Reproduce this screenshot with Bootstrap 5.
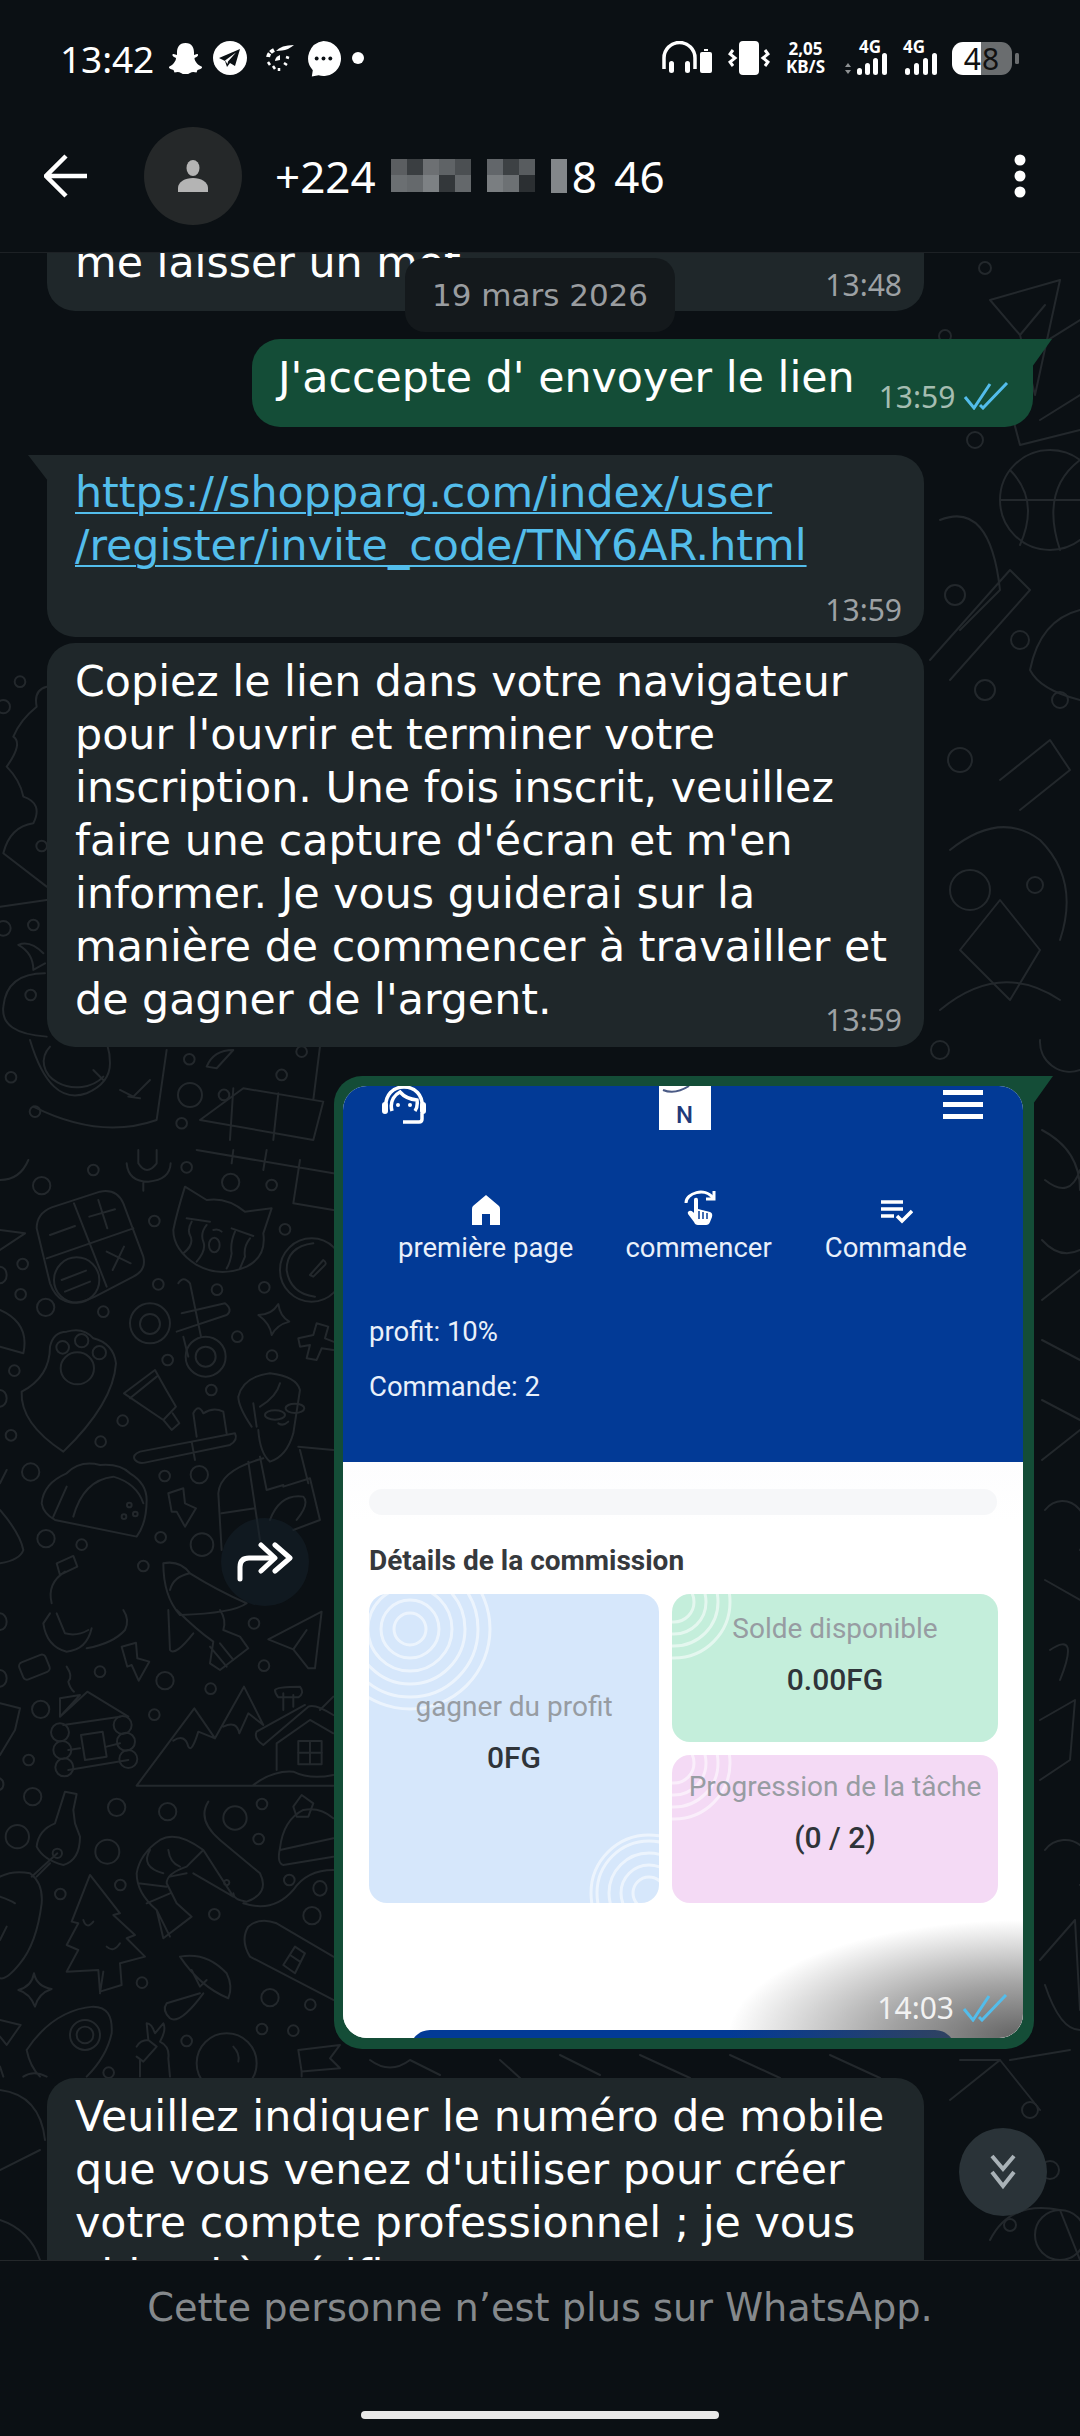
<!doctype html>
<html lang="fr">
<head>
<meta charset="utf-8">
<title>WhatsApp</title>
<link rel="stylesheet" href="https://cdn.jsdelivr.net/npm/bootstrap@5.3.0/dist/css/bootstrap.min.css">
<style>
html,body{margin:0;background:#0b1014}
.phone{width:1080px;height:2436px;background:#0b1014;color:#fff;font-family:"Noto Sans",sans-serif;overflow:hidden}
.topbar{height:253px;flex:none;background:#0b1014;border-bottom:1px solid #1d2125;padding-bottom:17px}
.statusrow{height:116px;padding:0 60px}
.clock{font-size:37px;line-height:1;letter-spacing:-.1px;margin-right:14px}
.speed{font-size:17px;line-height:18px;font-weight:700;text-align:center}
.battery{width:60px;height:33px;border-radius:11px;overflow:hidden;background:linear-gradient(90deg,#fff 0 29px,#6a6d6f 29px);color:#111;font-size:30px;line-height:33px;text-align:center;letter-spacing:1px;font-weight:400}
.toolrow{height:120px;padding-left:44px;padding-right:54px}
.face{width:98px;height:98px;border-radius:50%;background:#252829;margin-left:56px;margin-right:33px}
.title{font-size:44px;line-height:1;word-spacing:6px}
.mosaic{margin:0 3px 0 15px}
.chat{flex:1 1 auto;position:relative;overflow:hidden;min-height:0}
.paper{position:absolute;left:0;top:0;width:1080px;height:2007px;pointer-events:none}
.paper *{fill:none;stroke:#23282c;stroke-width:6;stroke-linecap:round;stroke-linejoin:round}
.paper .plain *{stroke-width:2}
.feed{position:relative}
.msg{font-family:"DejaVu Sans",sans-serif;font-size:42.75px;line-height:53px}
.inbox{position:relative;width:877px;margin-left:47px;background:#1f272a;border-radius:28px;padding:0 28px}
.outbox{position:relative;background:#144d37;border-radius:28px}
.tail-l{border-top-left-radius:0}
.tail-l::before{content:"";position:absolute;left:-19px;top:0;width:20px;height:26px;background:#1f272a;clip-path:polygon(0 0,100% 0,100% 100%)}
.tail-r{border-top-right-radius:0}
.tail-r::after{content:"";position:absolute;right:-19px;top:0;width:20px;height:28px;background:#144d37;clip-path:polygon(0 0,100% 0,0 100%)}
.stamp{font-family:"Noto Sans",sans-serif;font-size:30px;line-height:40px;color:#9da1a4}
.stamp-row{margin-right:-6px}
.first{margin-top:-40px;padding-top:23px;padding-bottom:6px}
.first .stamp-row{margin-top:-24px}
.sent{width:781px;margin-left:252px;margin-top:28px;height:88px;padding:12px 0 0 26px}
.sent .stamp{color:#a5bdb1;margin:26px 0 0 24px}
.checks{margin-left:8px;margin-top:31px}
.linkbox{margin-top:28px;padding-top:11px;padding-bottom:7px}
.linkbox a{color:#53bdeb;text-decoration:underline;text-underline-offset:5px;text-decoration-thickness:2px}
.linkbox .stamp-row{margin-top:18px}
.longbox{margin-top:6px;padding-top:12px;padding-bottom:7px}
.longbox .stamp-row{margin-top:-26px}
.lastbox{margin-top:29px;padding-top:12px;padding-bottom:30px}
.imgbubble{width:700px;height:973px;margin-left:334px;margin-top:29px;padding:10px 11px 11px 9px}
.shot{position:relative;height:952px;border-radius:24px;overflow:hidden;background:#fff;font-family:Roboto,sans-serif}
.bluepart{height:376px;background:#023a96;color:#e9f0fa;font-size:27.5px;line-height:32px}
.shotnav{padding:0 40px 0 39px;height:48px}
.logo{width:52px;height:44px;background:#fff;color:#1f3a7a;font-size:24px;font-weight:500;line-height:24px;text-align:center;padding-top:17px;position:relative}
.menu3{width:40px;height:29px;margin-top:4px;border-top:5px solid #fff;border-bottom:5px solid #fff;position:relative}
.menu3::after{content:"";position:absolute;left:0;right:0;top:7px;height:5px;background:#fff}
.tabs{padding:55px 0 0 55px}
.tab{text-align:center;white-space:nowrap}
.tab svg{display:block;margin:0 auto 7px}
.tabgap1{margin-left:52px}
.tabgap2{margin-left:53px}
.rate{padding:52px 0 0 26px}
.rate p{margin:0 0 23px}
.whitepart{padding:27px 26px 0;color:#333a40;background:linear-gradient(#fdfdfe,#fff 60px)}
.ghostbar{height:26px;background:#f6f7f9;border-radius:13px;margin-bottom:31px}
.subhead{font-size:28px;font-weight:700;line-height:30px;margin:0 0 18px;color:#36393d}
.cards{display:grid;grid-template-columns:290px 326px;grid-template-rows:148px 148px;gap:13px}
.tile{position:relative;overflow:hidden;border-radius:18px;text-align:center}
.tile svg{position:absolute;fill:none;stroke:#fff;stroke-opacity:.55;stroke-width:3}
.tile-blue{grid-row:1 / span 2;background:#d6e7fb;padding-top:97px}
.tile-green{background:#c4eedb;padding-top:19px}
.tile-pink{background:#f4daf5;padding-top:16px}
.tile-k{position:relative;font-size:28px;line-height:32px;color:#979ca2;display:block}
.tile-v{position:relative;font-size:30px;line-height:36px;font-weight:500;color:#2f3439;display:block;margin-top:17px}
.cta{height:20px;background:#023a96;border-radius:20px 20px 0 0;margin:127px 42px 0 41px}
.shade{position:absolute;left:0;right:0;bottom:0;height:160px;background:radial-gradient(ellipse 295px 118px at 100% 100%,rgba(70,70,70,.85),rgba(70,70,70,.5) 45%,rgba(70,70,70,0) 100%)}
.shot-time{position:absolute;right:15px;bottom:10px;font-family:"Noto Sans",sans-serif;font-size:30px;line-height:40px;color:#f2f2f2}
.datechip{position:absolute;left:405px;top:5px;width:270px;height:74px;border-radius:20px;background:#14191c;color:#9a9da0;font-family:"DejaVu Sans",sans-serif;font-size:31px;line-height:74px;text-align:center}
.fwd{position:absolute;left:221px;top:1265px;width:88px;height:88px;border-radius:50%;background:rgba(22,33,41,.55)}
.down{position:absolute;left:959px;top:1875px;width:88px;height:88px;border-radius:50%;background:#2a3338}
.bottombar{height:176px;flex:none;background:#0b1014;border-top:1px solid #24282b;padding-top:22px}
.gone{font-family:"DejaVu Sans",sans-serif;font-size:38.3px;line-height:50px;color:#85898c;text-align:center}
.homebar{width:358px;height:8px;background:#e8e8e8;border-radius:4px;margin:0 auto;position:relative;top:78px}
</style>
</head>
<body>
<div class="phone d-flex flex-column">
  <header class="topbar">
    <div class="statusrow d-flex align-items-center">
      <span class="clock">13:42</span>
      <svg width="35" height="31" viewBox="0 0 35 31"><path fill="#fff" d="M17.500 0C24 0 26 5 26 9.500V12l3-1c1.500 0 1.500 2-.5 3l-2 1c0 3 3 7 7 8.500 1 .5.500 2-1 2.500l-3 1-1 2.500c-2-.5-4.500-1-6.500.5-2 1.300-3 1.500-4.500 1.500s-2.500-.2-4.500-1.500c-2-1.500-4.500-1-6.500-.5l-1-2.500-3-1c-1.500-.5-2-2-1-2.500C5 22 8 18 8 15l-2-1c-2-1-2-3-.5-3l3.500 1V9.500C9 5 11 0 17.500 0z"/></svg>
      <svg width="34" height="34" viewBox="0 0 34 34" style="margin-left:10px"><circle cx="17" cy="17" r="17" fill="#fff"/><path fill="#0b1014" d="M27 8 6 17l6 3 2 6 3-4 5 3zM12 19.500 23 11.500 15 20.500 14.500 23z"/></svg>
      <svg width="28" height="28" viewBox="0 0 28 28" style="margin-left:19px" fill="none"><path d="M28 1Q15 1 10 7l6-.5Q22 6 28 1z" fill="#fff"/><path d="M8 6Q2 9 2 14" stroke="#fff" stroke-width="4" stroke-dasharray="4 1.500"/><path d="M2 18l2 3M7 22l2 3M13 24l0 3M18 19l3 2M20 13l3 1" stroke="#fff" stroke-width="2.500"/><path d="M14 11Q9 13 9 17l5-1z" fill="#fff"/></svg>
      <svg width="37" height="37" viewBox="0 0 38 38" style="margin-left:11px"><path fill="#fff" d="M19 1a18 18 0 1 1-5 35.300L7 37.500l1-6.500A18 18 0 0 1 19 1z"/><circle cx="12" cy="19" r="2" fill="#0b1014"/><circle cx="19" cy="19" r="2" fill="#0b1014"/><circle cx="26" cy="19" r="2" fill="#0b1014"/></svg>
      <svg width="12" height="12" viewBox="0 0 12 12" style="margin-left:10px"><circle cx="6" cy="6" r="6" fill="#fff"/></svg>
      <div class="d-flex align-items-center ms-auto">
        <svg width="50" height="34" viewBox="0 0 50 34" fill="none"><path d="M2 28V17a15.500 15.500 0 0 1 31 0v11" stroke="#fff" stroke-width="3.500"/><rect x="7" y="20" width="5" height="12" rx="2.500" fill="#fff"/><rect x="23" y="20" width="5" height="12" rx="2.500" fill="#fff"/><rect x="38" y="11" width="12" height="21" rx="2" fill="#fff"/><rect x="42" y="8" width="4" height="2" fill="#fff"/></svg>
        <svg width="42" height="34" viewBox="0 0 42 34" style="margin-left:16px" fill="none"><rect x="11" y="0" width="20" height="34" rx="4" fill="#fff"/><path d="M5 9l-3 4 5 4-5 4 3 4M37 9l3 4-5 4 5 4-3 4" stroke="#fff" stroke-width="3"/></svg>
        <div class="speed" style="margin-left:16px">2,05<br>KB/S</div>
        <svg width="42" height="36" viewBox="0 0 42 36" style="margin-left:20px" fill="#fff"><text x="14" y="13" font-family="Noto Sans" font-size="17" font-weight="700">4G</text><path d="M0 27l3-4 3 4z" fill="#8e9193"/><path d="M0 30l3 4 3-4z" fill="#8e9193"/><rect x="12" y="28" width="5" height="7" rx="2.500"/><rect x="20" y="23" width="5" height="12" rx="2.500"/><rect x="28" y="18" width="5" height="17" rx="2.500"/><rect x="37" y="13" width="5" height="22" rx="2.500"/></svg>
        <svg width="35" height="36" viewBox="0 0 35 36" style="margin-left:15px" fill="#fff"><text x="1" y="13" font-family="Noto Sans" font-size="17" font-weight="700">4G</text><rect x="3" y="28" width="5" height="7" rx="2.500"/><rect x="12" y="23" width="5" height="12" rx="2.500"/><rect x="21" y="18" width="5" height="17" rx="2.500"/><rect x="30" y="13" width="5" height="22" rx="2.500"/></svg>
        <div class="battery" style="margin-left:15px">48</div>
        <svg width="4" height="11" viewBox="0 0 4 11" style="margin-left:3px;margin-right:1px"><rect width="4" height="11" rx="1.500" fill="#6a6d6f"/></svg>
      </div>
    </div>
    <div class="toolrow d-flex align-items-center">
      <svg width="44" height="44" viewBox="0 0 44 44" fill="none"><path d="M43 22H3M22 2 2 22l20 20" stroke="#fff" stroke-width="4.500"/></svg>
      <div class="face d-flex align-items-center justify-content-center">
        <svg width="32" height="32" viewBox="0 0 32 32"><ellipse cx="16" cy="8" rx="6.500" ry="8" fill="#b4b4b4"/><path d="M1 32v-4c0-6 7-10 15-10s15 4 15 10v4z" fill="#b4b4b4"/></svg>
      </div>
      <span class="title">+224</span>
      <svg class="mosaic" width="178" height="34" viewBox="0 0 178 34"><g fill="#6d7073"><rect width="16" height="16" fill="#5b5e61"/><rect x="16" width="16" height="16" fill="#3a3e41"/><rect x="32" width="16" height="16" fill="#6d7073"/><rect x="48" width="16" height="16" fill="#5f6366"/><rect x="64" width="16" height="16" fill="#4b4f52"/><rect y="16" width="16" height="17" fill="#6b6f72"/><rect x="16" y="16" width="16" height="17" fill="#65696c"/><rect x="32" y="16" width="16" height="17" fill="#7d8184"/><rect x="48" y="16" width="16" height="17" fill="#33373a"/><rect x="64" y="16" width="16" height="17" fill="#64686b"/><rect x="96" width="16" height="16" fill="#62666a"/><rect x="112" width="16" height="16" fill="#3d4144"/><rect x="128" width="16" height="16" fill="#585c5f"/><rect x="96" y="16" width="16" height="17" fill="#7a7e81"/><rect x="112" y="16" width="16" height="17" fill="#6d7174"/><rect x="128" y="16" width="16" height="17" fill="#2b2f32"/><rect x="160" width="16" height="34" fill="#83878a"/></g></svg>
      <span class="title">8 46</span>
      <svg class="ms-auto" width="12" height="44" viewBox="0 0 12 44" fill="#fff"><circle cx="6" cy="6" r="5.500"/><circle cx="6" cy="22" r="5.500"/><circle cx="6" cy="38" r="5.500"/></svg>
    </div>
  </header>

  <main class="chat">
    <svg class="paper" viewBox="0 253 1080 2007" aria-hidden="true">
      <g transform="translate(0,640) scale(.3333)">
        <circle cx="60" cy="125" r="16"/><circle cx="125" cy="618" r="16"/><circle cx="100" cy="855" r="16"/><circle cx="92" cy="1065" r="16"/><circle cx="10" cy="865" r="22"/><circle cx="10" cy="200" r="20"/>
        <path d="M140 140Q100 150 110 200Q60 240 40 290Q70 310 20 380Q60 420 70 470Q130 490 100 550Q30 560 10 640L140 740M0 800L140 780M130 940Q90 900 55 915Q100 940 100 990L135 970M135 1000Q20 1000 10 1100Q0 1180 140 1190"/>
        <path d="M90 1200Q150 1400 260 1360Q330 1330 330 1270Q330 1210 300 1180M150 1220a90 70 0 0 0 160 90M280 1290l30 30M500 1230L470 1440Q300 1500 100 1400"/>
        <path d="M360 1350L400 1370L450 1320M385 1370L420 1375"/>
        <circle cx="33" cy="1312" r="16"/><circle cx="105" cy="1415" r="16"/><circle cx="568" cy="1258" r="16"/><circle cx="570" cy="1365" r="36"/><circle cx="672" cy="1365" r="16"/><circle cx="845" cy="1305" r="16"/><circle cx="545" cy="1450" r="16"/><circle cx="905" cy="1235" r="16"/>
        <path d="M620 1280Q640 1230 700 1230L650 1285ZM730 1345L970 1385L940 1500L600 1440ZM835 1360L820 1500M960 1220L940 1380M700 1345L690 1500"/>
      </g>
      <g transform="translate(0,1150) scale(.3333)">
        <circle cx="125" cy="107" r="26"/><circle cx="280" cy="60" r="16"/><circle cx="463" cy="213" r="16"/><circle cx="692" cy="97" r="26"/><circle cx="815" cy="105" r="16"/><circle cx="560" cy="52" r="16"/><circle cx="855" cy="238" r="16"/><circle cx="68" cy="342" r="16"/><circle cx="62" cy="433" r="16"/><circle cx="137" cy="472" r="26"/><circle cx="310" cy="485" r="16"/><circle cx="475" cy="403" r="16"/><circle cx="651" cy="419" r="16"/><circle cx="793" cy="412" r="16"/><circle cx="712" cy="560" r="16"/><circle cx="816" cy="617" r="16"/><circle cx="503" cy="630" r="16"/><circle cx="634" cy="720" r="16"/><circle cx="43" cy="662" r="16"/><circle cx="368" cy="812" r="16"/><circle cx="302" cy="875" r="16"/><circle cx="33" cy="856" r="16"/><circle cx="92" cy="966" r="26"/><circle cx="494" cy="978" r="16"/><circle cx="598" cy="974" r="26"/><circle cx="138" cy="1166" r="26"/><circle cx="245" cy="1184" r="16"/><circle cx="482" cy="1162" r="16"/><circle cx="606" cy="1184" r="34"/><circle cx="430" cy="1248" r="16"/>
        <path d="M380 40Q385 95 445 95Q510 90 512 40M430 95V122M415 0V40Q440 80 470 40V0"/>
        <path d="M110 235Q110 190 155 172L300 125Q350 115 370 160L430 320Q440 360 400 380L285 440Q220 470 190 450Q165 440 150 400ZM222 160L320 410M140 325L400 235M268 200L345 178M295 150L322 235M150 255L225 228M320 305L392 340M372 290L338 360"/>
        <circle cx="230" cy="390" r="68"/><path d="M185 390L258 362M195 425L270 395"/>
        <path d="M555 110L620 150Q680 140 735 185L815 175L790 250Q800 320 740 350Q660 385 590 345Q520 300 520 240Q530 190 555 110ZM560 205L630 215M695 235L760 258M575 215Q560 240 572 260Q582 285 550 310M620 225Q600 250 610 275Q620 300 590 335M705 245Q690 280 695 310Q690 340 680 355M750 265Q730 290 735 320L720 355"/>
        <ellipse cx="643" cy="285" rx="16" ry="22"/><path d="M640 240Q655 235 665 245"/>
        <circle cx="935" cy="360" r="95"/><path d="M940 280Q860 290 860 360Q870 430 945 440M930 375L970 330Q985 340 970 350L940 380Z"/>
        <circle cx="450" cy="520" r="60"/><circle cx="450" cy="522" r="30"/><circle cx="617" cy="620" r="60"/><circle cx="617" cy="620" r="30"/>
        <path d="M535 400Q550 375 570 400L603 560M545 490L675 460Q700 480 680 495L530 545M550 560L565 620"/>
        <path d="M835 462Q840 500 868 515Q830 525 815 555Q810 520 775 495Q815 495 835 462Z"/>
        <path d="M950 520L985 530L975 565L1000 575M950 520L940 555L895 565L900 590L930 585L920 625L950 630L965 595L1000 600"/>
        <path d="M150 590Q160 545 200 545Q250 530 280 565Q340 580 348 640Q340 760 190 905Q60 820 65 725Q150 680 150 590Z"/>
        <circle cx="188" cy="592" r="19"/><circle cx="245" cy="572" r="20"/><circle cx="298" cy="608" r="20"/><ellipse cx="232" cy="655" rx="50" ry="48"/>
        <path d="M465 660L372 730L490 810L528 770Q495 715 465 660ZM390 745L470 680M490 810L515 840L538 820L518 790"/>
        <path d="M420 905Q395 915 405 930Q415 942 435 938L690 885Q715 870 705 850ZM575 875L585 930M590 860L580 790Q595 760 610 790Q640 770 670 785L680 850"/>
        <path d="M755 830Q715 770 715 740Q730 680 810 670Q890 680 900 720L880 850Q860 920 810 935Q780 910 775 840M760 760L770 830M840 700Q830 740 780 770M790 925Q660 960 655 1030L665 1200M780 920L800 1020L850 1005M895 890L1000 900M900 900L925 1000M745 935L780 1170M665 1090L765 1075M850 1010L930 985L960 1110L880 1140M810 1110Q840 1030 910 1040Q930 1060 890 1110"/>
        <ellipse cx="825" cy="795" rx="30" ry="14"/><ellipse cx="885" cy="775" rx="28" ry="14"/><path d="M835 820Q850 830 865 815"/>
        <path d="M165 1110Q130 1090 125 1060Q130 1000 200 970Q240 930 300 945Q360 940 390 970Q440 1000 440 1050Q440 1120 410 1160ZM220 1100Q250 990 340 980Q410 1000 430 1060M160 1100L200 1010"/>
        <circle cx="372" cy="1100" r="7"/><circle cx="406" cy="1092" r="7"/><circle cx="388" cy="1065" r="7"/>
        <path d="M505 1030L550 1015L555 1060L588 1075L555 1130L530 1085L515 1085Z"/>
        <path d="M170 1240L220 1218L232 1250L180 1275ZM195 1265Q140 1300 155 1360"/>
        <path d="M490 1240Q540 1230 570 1270Q650 1320 740 1360Q700 1390 540 1395Q490 1340 490 1240ZM510 1320Q520 1280 570 1270"/>
        <path d="M0 240L75 250L0 300M0 90Q60 90 85 30M0 480Q90 520 70 610L0 590M0 1000L20 960M0 1080Q60 1150 70 1200Q60 1230 0 1240M0 720a20 25 0 0 1 0 50M0 350a20 25 0 0 1 0 50"/>
        <path d="M590 0L1000 70M900 30L880 160L1000 180M800 0L790 60M700 0L695 40"/>
      </g>
      <g transform="translate(0,1610) scale(.3333)">
        <path d="M130 40Q140 110 200 125Q260 120 275 55M130 40L150 10M170 10L195 70Q230 80 265 60M260 115Q340 100 375 60Q390 30 370 0"/>
        <rect x="60" y="145" width="85" height="55" rx="12" transform="rotate(-22 100 170)"/><circle cx="300" cy="185" r="16"/><circle cx="122" cy="298" r="26"/><circle cx="495" cy="212" r="26"/><circle cx="463" cy="314" r="16"/><circle cx="632" cy="236" r="16"/><circle cx="762" cy="40" r="16"/><circle cx="792" cy="167" r="16"/><circle cx="86" cy="450" r="16"/><circle cx="98" cy="560" r="26"/><circle cx="350" cy="592" r="26"/><circle cx="503" cy="605" r="26"/><circle cx="705" cy="624" r="35"/><circle cx="786" cy="582" r="16"/><circle cx="776" cy="687" r="16"/><circle cx="868" cy="810" r="16"/><circle cx="52" cy="680" r="35"/><circle cx="322" cy="725" r="36"/><circle cx="361" cy="825" r="16"/><circle cx="181" cy="852" r="16"/><circle cx="643" cy="913" r="16"/><circle cx="936" cy="917" r="26"/><circle cx="426" cy="1118" r="16"/><circle cx="810" cy="1163" r="26"/><circle cx="931" cy="1184" r="16"/><circle cx="786" cy="1257" r="16"/><circle cx="880" cy="1262" r="16"/><circle cx="560" cy="1293" r="16"/><circle cx="326" cy="1388" r="16"/>
        <path d="M365 110L408 98L412 145L448 155L416 212L395 165L382 170Z"/>
        <path d="M505 0L510 120Q525 140 580 70M530 0Q590 60 640 95L630 160L660 180L745 115L720 80L670 60Q680 30 660 0M660 100L700 150M630 110L680 170"/>
        <path d="M965 5L805 88L880 118L925 175L945 175ZM880 118L920 60"/>
        <path d="M200 170Q220 200 205 215Q210 235 222 245M180 265L240 255L180 320ZM180 320L262 245L385 320M190 345L360 320M205 420L240 415M320 410L360 400M205 480L385 450"/>
        <circle cx="180" cy="367" r="27"/><circle cx="187" cy="420" r="27"/><circle cx="193" cy="472" r="27"/><circle cx="368" cy="345" r="27"/><circle cx="378" cy="395" r="27"/><circle cx="385" cy="447" r="27"/>
        <path d="M243 375L308 365L320 440L255 450Z"/>
        <path d="M410 527H1000M410 527L583 295L645 385L732 230L790 345M520 392Q555 370 565 410Q575 430 595 365L645 385M670 350Q710 330 718 370L745 310L790 345M760 525Q820 480 880 485Q930 510 1000 495"/>
        <path d="M790 405L925 290Q945 280 1000 315M790 405Q760 385 770 365L915 285M1000 370L930 330L830 400V480M850 300V250M880 290V255M825 240Q830 230 900 230Q915 250 895 262L835 262Q825 250 825 240Z"/>
        <rect x="895" y="393" width="70" height="70"/><path d="M930 393V463M895 428H965"/>
        <path d="M195 545L230 552L220 600L225 640L240 680Q240 750 190 765Q130 750 110 710Q115 660 165 640Z"/><circle cx="172" cy="730" r="14"/>
        <path d="M172 730L95 800M150 760L110 800M90 790Q130 820 125 880Q110 1000 60 1060Q20 1110 0 1105M90 790Q40 780 0 800M0 860Q30 870 45 880M20 950L0 990"/>
        <path d="M270 795L360 910L340 915L405 975L380 985L435 1040L360 1060L365 1125L300 1145L295 1080L200 1085L235 1020L200 1005L235 940L215 935ZM250 930Q260 960 280 935M320 1010Q340 1030 360 1000M310 1085L300 1150"/>
        <path d="M610 720Q530 660 480 690Q420 730 410 790Q410 850 470 900L490 985L575 920L530 880L500 820Q500 790 560 770ZM505 720Q510 760 540 770M450 720Q420 770 490 790M415 820L500 830M440 880L510 850M470 900L510 980M610 720L700 860L580 790M510 800L560 790M680 810a8 8 0 1 0 .1 0"/>
        <path d="M625 575Q590 630 660 690L780 790Q810 850 740 875Q700 870 700 850M730 880Q820 910 880 840Q920 780 1000 780"/><ellipse cx="960" cy="835" rx="20" ry="22"/>
        <path d="M1000 625Q960 590 910 600Q850 630 840 715Q830 760 850 765L1000 740M840 720L1000 685"/>
        <path d="M880 590L905 555L940 580L925 620L890 620Z"/>
        <path d="M1000 1040L830 940Q780 920 745 950Q720 990 750 1040L1000 1170"/>
        <path d="M850 1065L885 1010L915 1030L885 1090ZM870 1035L900 1055"/>
        <path d="M540 1040Q620 1025 680 1090Q700 1130 685 1165Q600 1130 540 1040ZM600 1150L500 1180Q485 1200 510 1225Q540 1245 610 1150M575 1080L600 1130L620 1110"/>
        <path d="M102 1090Q110 1130 155 1137Q115 1150 105 1190Q90 1150 55 1140Q95 1130 102 1090Z"/>
        <path d="M0 1230L62 1245L20 1305L0 1280M80 1320Q160 1200 280 1190Q340 1190 335 1270Q320 1340 260 1400M80 1320Q90 1370 120 1400M70 1400Q100 1380 140 1400"/>
        <circle cx="255" cy="1275" r="45"/><circle cx="255" cy="1275" r="25"/>
        <path d="M445 1290L440 1240Q455 1240 465 1270L490 1240Q500 1260 480 1295Q510 1310 505 1345L510 1400M410 1310Q420 1290 445 1290L470 1310L430 1355L410 1340M420 1350V1400"/>
        <circle cx="680" cy="1360" r="90"/><path d="M700 1310Q720 1330 715 1355"/>
        <path d="M895 1320L1020 1305L990 1345L1020 1375L905 1385ZM905 1385L905 1400"/>
        <path d="M0 10a20 25 0 0 1 0 50M0 180a20 25 0 0 1 0 50M0 280L60 295L45 360L0 435M0 505a20 20 0 0 1 0 35M1000 260L960 300M0 1370L10 1400"/>
      </g>
      <g class="plain">
        <path d="M1060 280L990 300L1020 335L1035 395ZM1020 335L1045 305"/>
        <path d="M1080 320L1000 370L1020 445L1080 430M1040 420L1080 395"/>
        <circle cx="985" cy="268" r="6"/><circle cx="945" cy="336" r="6"/><circle cx="1050" cy="500" r="50"/><path d="M1010 470Q1040 500 1020 545M1080 460Q1040 490 1060 550M1000 500H1100"/>
        <circle cx="975" cy="440" r="8"/><circle cx="940" cy="380" r="9"/><circle cx="955" cy="595" r="10"/><circle cx="1020" cy="410" r="6"/>
        <path d="M940 520Q990 500 1000 590L960 630M930 660L1010 570L1030 590L950 680"/>
        <circle cx="985" cy="690" r="10"/><circle cx="1020" cy="640" r="9"/><circle cx="960" cy="760" r="12"/><circle cx="1060" cy="700" r="8"/>
        <path d="M1080 610Q1040 620 1030 670Q1040 690 1080 700M1000 780L1050 740L1070 770L1020 810M950 850Q1000 810 1040 840Q1080 880 1060 940M960 950L1000 900L1040 950L1010 1000ZM940 1010Q1000 960 1060 1000M1040 1040a30 30 0 0 0 40 30"/>
        <circle cx="970" cy="890" r="20"/><circle cx="1035" cy="885" r="8"/><circle cx="940" cy="1050" r="9"/>
        <path d="M1042 1130Q1080 1150 1080 1190M1045 1180Q1070 1200 1080 1170M1042 1240Q1060 1260 1080 1250M1042 1300L1080 1270M1042 1340L1080 1360M1042 1400L1080 1420M1042 1460L1080 1430M1045 1510a20 24 0 0 1 35 40M1045 1580L1080 1600M1050 1650Q1080 1630 1060 1680M1040 1720L1075 1700L1070 1760L1040 1780M1045 1850a25 25 0 1 1 35 35M1040 1960L1075 1920L1080 2010M1045 1985Q1060 2030 1080 2030"/>
        <path d="M950 2100L1000 2060L1040 2110M990 2240Q1010 2200 1060 2210L1080 2260M1000 2060L960 2060M1070 2050L1010 2060"/>
        <circle cx="1010" cy="2225" r="6"/><circle cx="1030" cy="2110" r="8"/><circle cx="1050" cy="2170" r="9"/><circle cx="1060" cy="2235" r="25"/>
        <path d="M370 2060Q390 2075 410 2060L440 2075M500 2060L520 2078M560 2055L600 2075M640 2055L690 2078M730 2055L780 2078M830 2055L880 2078M0 2090Q40 2095 45 2140M0 2170L40 2150M0 2220Q30 2230 40 2260"/>
      </g>
    </svg>

    <div class="feed">
      <div class="inbox msg first">me laisser un mot
        <div class="stamp-row d-flex justify-content-end"><span class="stamp">13:48</span></div>
      </div>

      <div class="outbox tail-r sent msg d-flex align-items-start">
        <span>J'accepte d' envoyer le lien</span>
        <span class="stamp">13:59</span>
        <svg class="checks" width="46" height="28" viewBox="0 0 46 28" fill="none"><path d="M2 15l9 11L27 2M17 23l3 3L44 1" stroke="#53bdeb" stroke-width="3"/></svg>
      </div>

      <div class="inbox tail-l linkbox msg">
        <a href="#">https://shopparg.com/index/user</a><br><a href="#">/register/invite_code/TNY6AR.html</a>
        <div class="stamp-row d-flex justify-content-end"><span class="stamp">13:59</span></div>
      </div>

      <div class="inbox longbox msg">Copiez le lien dans votre navigateur<br>pour l'ouvrir et terminer votre<br>inscription. Une fois inscrit, veuillez<br>faire une capture d'écran et m'en<br>informer. Je vous guiderai sur la<br>manière de commencer à travailler et<br>de gagner de l'argent.
        <div class="stamp-row d-flex justify-content-end"><span class="stamp">13:59</span></div>
      </div>

      <div class="outbox tail-r imgbubble">
        <div class="shot">
          <div class="bluepart">
            <div class="shotnav d-flex justify-content-between align-items-start">
              <svg width="44" height="38" viewBox="0 0 44 38" fill="none"><path d="M4 24C2 8 12 1 22 1s20 7 18 23M10 25C7 14 14 8 18 6q6 7 17 8 1 7-2 11" stroke="#fff" stroke-width="3.500"/><rect x="0" y="16" width="6" height="12" rx="3" fill="#fff"/><rect x="38" y="16" width="6" height="12" rx="3" fill="#fff"/><circle cx="16" cy="19" r="2" fill="#fff"/><circle cx="28" cy="19" r="2" fill="#fff"/><path d="M40 27v6q0 3-3 3H21" stroke="#fff" stroke-width="3.500"/></svg>
              <div class="logo">N<svg width="34" height="12" viewBox="0 0 34 12" style="position:absolute;left:2px;top:0"><path d="M2 4Q14 9 28 0" fill="none" stroke="#4a5a85" stroke-width="2"/></svg></div>
              <div class="menu3"></div>
            </div>
            <div class="tabs d-flex align-items-end">
              <div class="tab"><svg width="28" height="30" viewBox="0 0 28 30"><path fill="#fff" d="M14 0 27 11q1 1 1 3v16H18V19h-8v11H0V14q0-2 1-3z"/></svg>première page</div>
              <div class="tab tabgap1"><svg width="36" height="36" viewBox="0 0 36 36" fill="none"><path d="M5 14C5 4 24 -2 32 9" stroke="#fff" stroke-width="3"/><path d="M33 2v8h-8" stroke="#fff" stroke-width="3"/><path fill="#fff" d="M14 9q3-1 3 2v9l12 3q3 1 2 5l-2 5q-1 3-4 3H17q-3 0-4-3l-6-8q-1-2 1-3 2-1 4 1l1 1V11q0-2 1-2z"/><path d="M18 22v8M22 23v7M26 24v6" stroke="#023a96" stroke-width="1.500"/></svg>commencer</div>
              <div class="tab tabgap2"><svg width="34" height="26" viewBox="0 0 34 26" fill="none"><path d="M2 3H24M2 10H24M2 17H15" stroke="#fff" stroke-width="3.500"/><path d="M18 17l5 5 10-10" stroke="#fff" stroke-width="3.500"/></svg>Commande</div>
            </div>
            <div class="rate"><p>profit: 10%</p><p>Commande: 2</p></div>
          </div>
          <div class="whitepart">
            <div class="ghostbar"></div>
            <div class="subhead">Détails de la commission</div>
            <div class="cards">
              <div class="tile tile-blue">
                <svg style="left:-41px;top:-47px" width="164" height="164" viewBox="0 0 164 164"><circle cx="82" cy="82" r="16"/><circle cx="82" cy="82" r="29"/><circle cx="82" cy="82" r="42"/><circle cx="82" cy="82" r="55"/><circle cx="82" cy="82" r="68"/><circle cx="82" cy="82" r="80"/></svg>
                <svg style="right:-50px;bottom:-50px" width="120" height="120" viewBox="0 0 120 120"><circle cx="60" cy="60" r="16"/><circle cx="60" cy="60" r="28"/><circle cx="60" cy="60" r="40"/><circle cx="60" cy="60" r="52"/><circle cx="60" cy="60" r="58"/></svg>
                <span class="tile-k">gagner du profit</span><span class="tile-v">0FG</span>
              </div>
              <div class="tile tile-green">
                <svg style="left:-60px;top:-54px" width="124" height="124" viewBox="0 0 124 124"><circle cx="62" cy="62" r="20"/><circle cx="62" cy="62" r="32"/><circle cx="62" cy="62" r="44"/><circle cx="62" cy="62" r="56"/></svg>
                <span class="tile-k">Solde disponible</span><span class="tile-v">0.00FG</span>
              </div>
              <div class="tile tile-pink">
                <svg style="left:-60px;top:-54px" width="124" height="124" viewBox="0 0 124 124"><circle cx="62" cy="62" r="20"/><circle cx="62" cy="62" r="32"/><circle cx="62" cy="62" r="44"/><circle cx="62" cy="62" r="56"/></svg>
                <span class="tile-k">Progression de la tâche</span><span class="tile-v">(0 / 2)</span>
              </div>
            </div>
            <div class="cta"></div>
          </div>
          <div class="shade"></div>
          <div class="shot-time d-flex align-items-center gap-2">14:03<svg width="46" height="28" viewBox="0 0 46 28" fill="none"><path d="M2 15l9 11L27 2M17 23l3 3L44 1" stroke="#53bdeb" stroke-width="3"/></svg></div>
        </div>
      </div>

      <div class="inbox lastbox msg">Veuillez indiquer le numéro de mobile<br>que vous venez d'utiliser pour créer<br>votre compte professionnel ; je vous<br>aiderai à vérifier votre compte.</div>
    </div>

    <div class="datechip">19 mars 2026</div>
    <div class="fwd d-flex align-items-center justify-content-center">
      <svg width="56" height="40" viewBox="0 0 56 40" fill="none" stroke="#fff" stroke-width="5" stroke-linecap="round" stroke-linejoin="round"><path d="M3 37V25q0-9 9-9h21"/><path d="M24 3l14 13-14 13"/><path d="M38 3l15 13-15 13"/></svg>
    </div>
    <div class="down d-flex align-items-center justify-content-center">
      <svg width="26" height="36" viewBox="0 0 26 36" fill="none" stroke="#a9b2b7" stroke-width="4"><path d="M2 2l11 13L24 2"/><path d="M2 18l11 14 11-14"/></svg>
    </div>
  </main>

  <footer class="bottombar">
    <div class="gone">Cette personne n’est plus sur WhatsApp.</div>
    <div class="homebar"></div>
  </footer>
</div>
<script src="https://cdn.jsdelivr.net/npm/bootstrap@5.3.0/dist/js/bootstrap.bundle.min.js"></script>
</body>
</html>
